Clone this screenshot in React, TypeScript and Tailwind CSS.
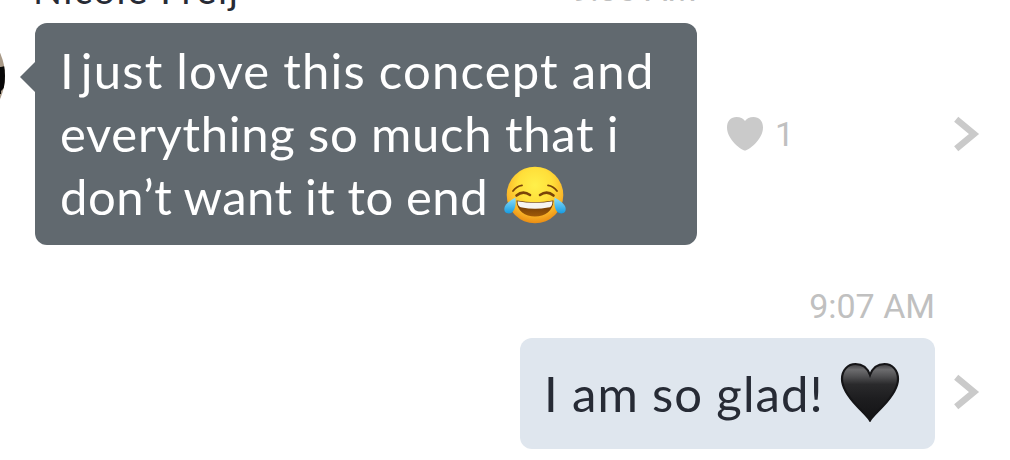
type Line = { lead?: string; text: string; className: string };

const incoming: Line[] = [
  { lead: "I", text: "just love this concept and", className: "tracking-[1.2px] [word-spacing:-0.8px]" },
  { text: "everything so much that i", className: "tracking-[0.7px] [word-spacing:-0.6px]" },
  { text: "don’t want it to end", className: "tracking-[0.5px] [word-spacing:-0.8px]" },
];

function Chevron() {
  return (
    <svg width="26" height="36" viewBox="0 0 26 36" fill="none" stroke="#cacaca" strokeWidth="6.5">
      <path d="M2.200 3.300 20 18 2.200 32.700" />
    </svg>
  );
}

function Avatar() {
  return (
    <div className="flex h-[112px] w-[5px] shrink-0 justify-end overflow-hidden">
      <svg className="shrink-0" width="112" height="112" viewBox="0 0 112 112">
        <defs>
          <clipPath id="avatar">
            <circle cx="56" cy="56" r="56" />
          </clipPath>
        </defs>
        <g clipPath="url(#avatar)">
          <path d="M0 0h112v112H0z" fill="#a99a88" />
          <path d="M0 40l108 7 4-1v21l-4 4v3L0 82z" fill="#080808" />
          <path d="M100 75l7 -2v9l-7 4z" fill="#8e8a86" />
        </g>
      </svg>
    </div>
  );
}

function JoyEmoji() {
  return (
    <svg width="62" height="58" viewBox="0 0 62 58" role="img" aria-label="😂">
      <defs>
        <radialGradient id="face" cx="0.5" cy="0.33" r="0.68">
          <stop offset="0" stopColor="#fff04a" />
          <stop offset="0.45" stopColor="#ffdf3a" />
          <stop offset="0.75" stopColor="#fbb82a" />
          <stop offset="1" stopColor="#e98a12" />
        </radialGradient>
        <linearGradient id="mouth" x1="0" y1="0" x2="0" y2="1">
          <stop offset="0" stopColor="#5c2f06" />
          <stop offset="1" stopColor="#a05a08" />
        </linearGradient>
        <linearGradient id="tear" x1="0" y1="0" x2="0" y2="1">
          <stop offset="0" stopColor="#8fe0fb" />
          <stop offset="1" stopColor="#169be2" />
        </linearGradient>
      </defs>
      <circle cx="31" cy="29" r="28.3" fill="url(#face)" />
      <g fill="none" stroke="#7a4408" strokeLinecap="round">
        <path d="M9 25Q12.500 20 18 19.300" strokeWidth="1.8" />
        <path d="M53 25Q49.500 20 44 19.300" strokeWidth="1.8" />
        <path d="M12.500 29.500Q19 24 26 29" strokeWidth="2.6" />
        <path d="M49.500 29.500Q43 24 36 29" strokeWidth="2.6" />
      </g>
      <path d="M12.500 34.500Q31 38 49.500 34.500C49 45 41 50.500 31 50.500S13 45 12.500 34.500z" fill="url(#mouth)" />
      <path d="M13.500 35.200Q31 38.500 48.500 35.200Q48.500 41.500 44 41.500Q31 44 18 41.500Q13.500 41 13.500 35.200z" fill="#f6f5f2" />
      <path d="M11.300 31.500C12.500 38 11 47.500 4.800 47.500C1.500 47.500 .3 45.500 .3 42.800C.3 38 6.500 34.500 11.300 31.500z" fill="url(#tear)" />
      <path d="M50.700 31.500C49.500 38 51 47.500 57.200 47.500C60.500 47.500 61.700 45.500 61.700 42.800C61.700 38 55.500 34.500 50.700 31.500z" fill="url(#tear)" />
    </svg>
  );
}

function BlackHeart() {
  return (
    <svg width="60" height="60" viewBox="0 0 60 60" role="img" aria-label="🖤">
      <defs>
        <linearGradient id="heart" x1="0" y1="0" x2="0" y2="1">
          <stop offset="0" stopColor="#3c3c3e" />
          <stop offset="0.1" stopColor="#6c6c6e" />
          <stop offset="0.22" stopColor="#505052" />
          <stop offset="0.36" stopColor="#2a2a2c" />
          <stop offset="0.6" stopColor="#1e1e20" />
          <stop offset="1" stopColor="#131315" />
        </linearGradient>
      </defs>
      <path
        d="M30 58.500C28 55 23 50.500 17 44C8 34.500 2 26 2 17C2 8 8 2 15.500 2C22 2 27.500 6 30 13C32.500 6 38 2 44.500 2C52 2 58 8 58 17C58 26 52 34.500 43 44C37 50.500 32 55 30 58.500z"
        fill="url(#heart)"
        stroke="#151517"
        strokeWidth="2.2"
      />
    </svg>
  );
}

export default function App() {
  return (
    <div className="flex h-[460px] w-[1010px] flex-col overflow-hidden bg-white font-['Lato',sans-serif]">
      {/* Sender and time, scrolled under the top edge */}
      <div className="flex h-[23px] shrink-0 items-end justify-between pr-[313px] pb-[14px] pl-[33px] leading-10 whitespace-nowrap">
        <span className="text-[38px] tracking-[1.6px] text-[#272b35]">Nicole Freij</span>
        <span className="font-['Roboto',sans-serif] text-[34px] text-[#c0c0c0]">9:06 AM</span>
      </div>

      <div className="flex h-[222px] shrink-0">
        <div className="flex w-[35px] items-start justify-between">
          <div className="-mt-[3px]">
            <Avatar />
          </div>
          <svg className="mt-[38px]" width="15" height="32" viewBox="0 0 15 32">
            <path d="M15 1v30L0 16z" fill="#61696f" />
          </svg>
        </div>
        <div className="w-[662px] rounded-xl bg-[#61696f] pt-[16px] pl-[25px] text-[49px] leading-[63px] whitespace-nowrap text-white">
          {incoming.map((line, i) => (
            <div key={line.text} className="flex h-[63px]">
              {line.lead && <span className="mr-[7px]">{line.lead}</span>}
              <span className={line.className}>{line.text}</span>
              {i === incoming.length - 1 && (
                <span className="ml-[16px] pt-[1px]">
                  <JoyEmoji />
                </span>
              )}
            </div>
          ))}
        </div>
        <div className="flex grow items-center pr-[30px] pl-[30px]">
          <svg width="36" height="34" viewBox="0 0 36 34" fill="#cacaca">
            <path d="M18 33.500C15 33.500 0 23 0 10.500C0 4 4 0 9.500 0C13.500 0 16 1.500 18 4C20 1.500 22.500 0 26.500 0C32 0 36 4 36 10.500C36 23 21 33.500 18 33.500z" />
          </svg>
          <span className="ml-[12px] font-['Roboto',sans-serif] text-[34px] leading-10 text-[#c0c0c0]">1</span>
          <div className="ml-auto">
            <Chevron />
          </div>
        </div>
      </div>

      <div className="flex h-[93px] shrink-0 items-end justify-end pr-[75px] pb-[12px] font-['Roboto',sans-serif] text-[34px] leading-10 text-[#c0c0c0]">
        9:07 AM
      </div>

      <div className="flex h-[111px] shrink-0 items-center justify-end pr-[30px]">
        <div className="flex h-[111px] w-[415px] rounded-xl bg-[#dfe6ee] pt-[24px] pl-[24px] text-[49px] leading-[63px] whitespace-nowrap text-[#272b35]">
          <span className="tracking-[1.1px] [word-spacing:-0.5px]">I am so glad!</span>
          <span className="ml-[16px]">
            <BlackHeart />
          </span>
        </div>
        <div className="mb-[4px] ml-[19px]">
          <Chevron />
        </div>
      </div>
    </div>
  );
}
